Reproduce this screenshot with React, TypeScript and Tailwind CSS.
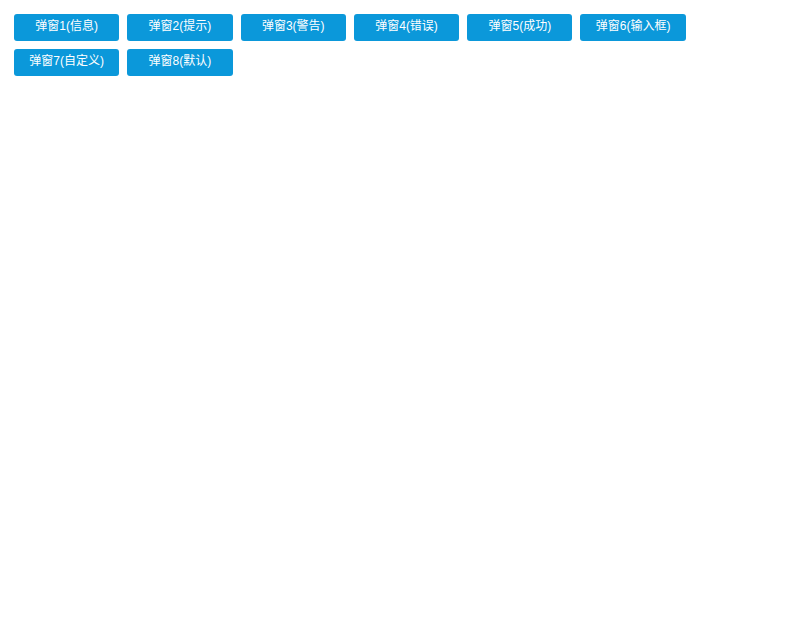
import React from "react";

const labels = [
  "弹窗1(信息)",
  "弹窗2(提示)",
  "弹窗3(警告)",
  "弹窗4(错误)",
  "弹窗5(成功)",
  "弹窗6(输入框)",
  "弹窗7(自定义)",
  "弹窗8(默认)",
];

export default function App() {
  return (
    <div className="min-h-[625px] w-[800px] bg-white p-[14px] font-['Liberation_Sans','Noto_Sans_CJK_SC',sans-serif]">
      <div className="flex w-[700px] flex-wrap gap-x-[8px] gap-y-[8px]">
        {labels.map((l) => (
          <button
            key={l}
            className="flex h-[27px] w-[105.3px] items-center justify-center rounded-[3px] bg-[#0b98da] pb-[3px] text-[12px] text-white"
          >
            {l}
          </button>
        ))}
      </div>
    </div>
  );
}
